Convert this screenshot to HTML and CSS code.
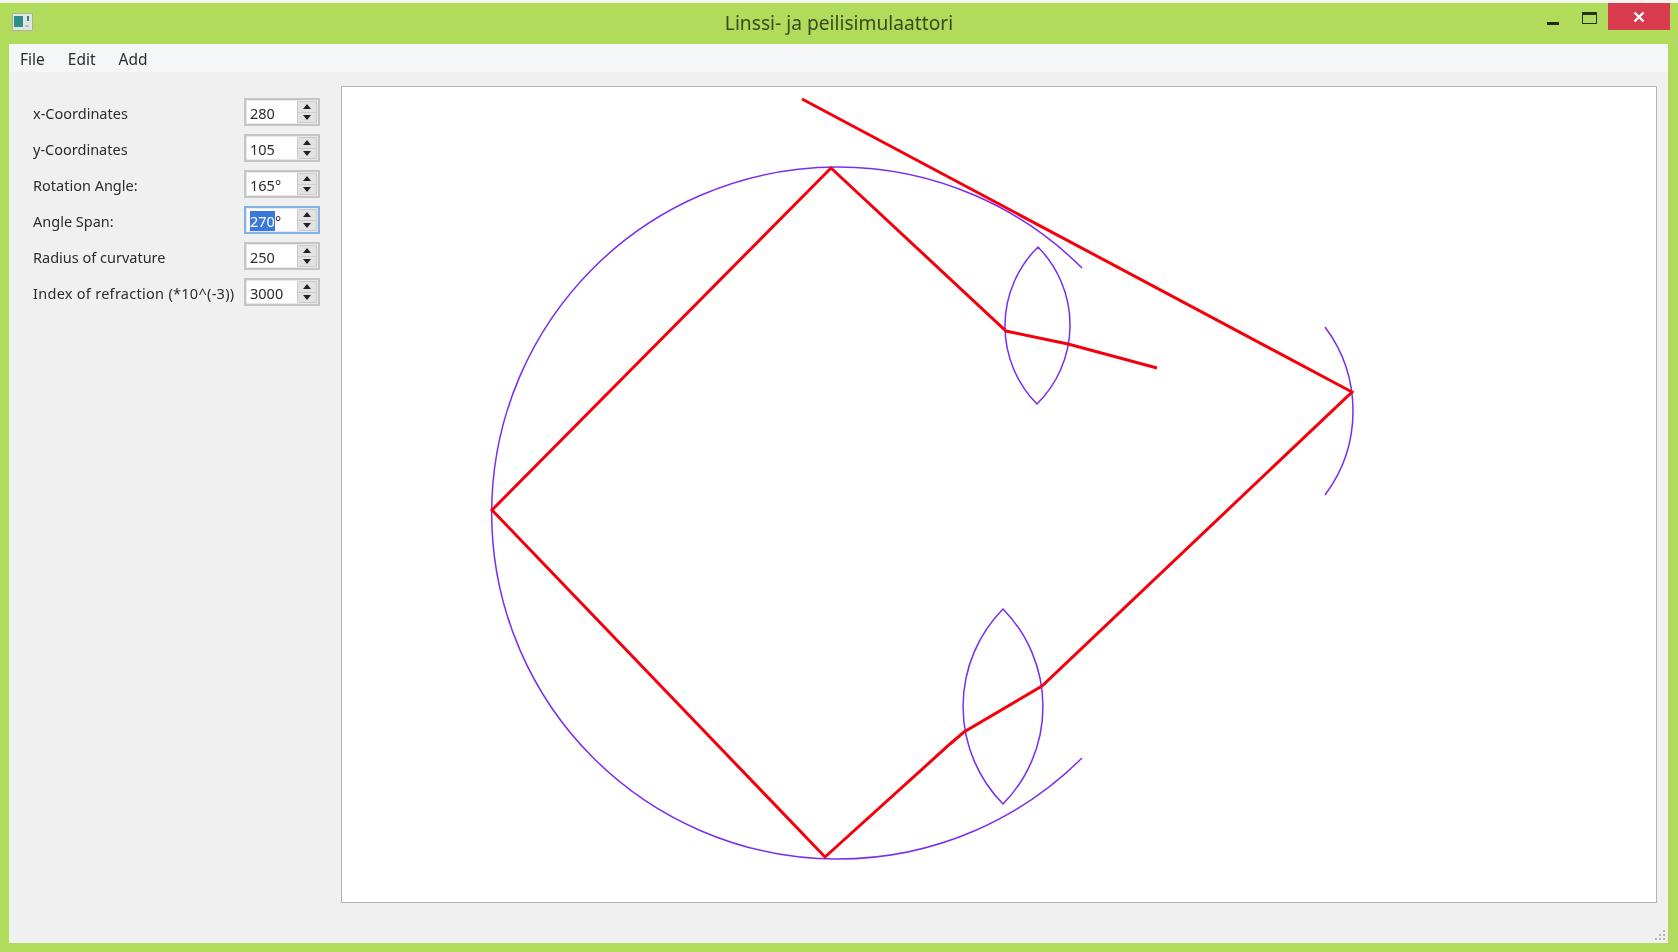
FILE: index.html
```html
<!DOCTYPE html>
<html lang="fi">
<head>
<meta charset="utf-8">
<title>Linssi- ja peilisimulaattori</title>
<link rel="stylesheet" href="styles.css">
</head>
<body>
<div class="window">
  <header class="titlebar">
    <svg class="app-icon" width="21" height="18" viewBox="0 0 21 18">
      <rect x="0.5" y="0.5" width="20" height="17" fill="#dfe6e4" stroke="#a9b39a"/>
      <rect x="2" y="3" width="9" height="11" fill="#2f8f86"/>
      <rect x="15" y="3" width="2" height="5" fill="#37808a"/>
      <rect x="13" y="12" width="4" height="2" fill="#b9c4c4"/>
    </svg>
    <div class="title">Linssi- ja peilisimulaattori</div>
    <div class="controls">
      <svg class="ctl-min" width="12" height="4" viewBox="0 0 12 4"><rect width="12" height="3" fill="#1f2a14"/></svg>
      <svg class="ctl-max" width="15" height="12" viewBox="0 0 15 12"><rect x="0.5" y="0.5" width="14" height="11" fill="none" stroke="#26301a"/><rect width="15" height="3" fill="#26301a"/></svg>
      <div class="ctl-close"><svg width="12" height="12" viewBox="0 0 12 12"><path d="M1.5 1.5L10.5 10.5M10.5 1.5L1.5 10.5" stroke="#fff" stroke-width="2.4" fill="none"/></svg></div>
    </div>
  </header>
  <div class="client">
    <nav class="menubar">
      <span class="menu-item">File</span>
      <span class="menu-item">Edit</span>
      <span class="menu-item">Add</span>
    </nav>
    <div class="main">
      <aside class="form">
        <div class="row"><span class="label">x-Coordinates</span><div class="spin"><span class="value">280</span><div class="btns"><i class="up"></i><i class="down"></i></div></div></div>
        <div class="row"><span class="label">y-Coordinates</span><div class="spin"><span class="value">105</span><div class="btns"><i class="up"></i><i class="down"></i></div></div></div>
        <div class="row"><span class="label">Rotation Angle:</span><div class="spin"><span class="value">165°</span><div class="btns"><i class="up"></i><i class="down"></i></div></div></div>
        <div class="row"><span class="label">Angle Span:</span><div class="spin focus"><span class="value"><span class="sel">270</span>°</span><div class="btns"><i class="up"></i><i class="down"></i></div></div></div>
        <div class="row"><span class="label">Radius of curvature</span><div class="spin"><span class="value">250</span><div class="btns"><i class="up"></i><i class="down"></i></div></div></div>
        <div class="row"><span class="label label-long">Index of refraction (*10^(-3))</span><div class="spin"><span class="value">3000</span><div class="btns"><i class="up"></i><i class="down"></i></div></div></div>
      </aside>
      <section class="canvas">
        <svg class="scene" viewBox="342 87 1314 815" width="1314" height="815">
          <g class="optic">
            <path d="M1082 268A346 346 0 1 0 1082 758"/>
            <path d="M1325 327A140 140 0 0 1 1325 495"/>
            <path d="M1038 247A111 111 0 0 0 1037 404A111 111 0 0 0 1038 247Z"/>
            <path d="M1003 609A139 139 0 0 0 1003 804A139 139 0 0 0 1003 609Z"/>
          </g>
          <g class="ray">
            <path d="M802 99L1352 392L1042 686L964 732L950 744L825 857L492 510L831 168L1006 331L1068 344L1157 368"/>
          </g>
        </svg>
      </section>
    </div>
    <svg class="grip" width="12" height="12" viewBox="0 0 12 12">
      <g fill="#b4b4b4"><rect x="9" y="1" width="2" height="2"/><rect x="5" y="5" width="2" height="2"/><rect x="9" y="5" width="2" height="2"/><rect x="1" y="9" width="2" height="2"/><rect x="5" y="9" width="2" height="2"/><rect x="9" y="9" width="2" height="2"/></g>
    </svg>
  </div>
</div>
</body>
</html>
```
FILE: styles.css
```css
* { box-sizing: border-box; }
html, body { margin: 0; height: 100%; }
body {
  background: #f4f6ee;
  padding-top: 3px;
  font-family: "Noto Sans", "Open Sans", sans-serif;
  font-size: 14.5px;
  color: #2b2b30;
  overflow: hidden;
}
.window {
  height: 949px;
  background: #b0db5b;
  display: flex;
  flex-direction: column;
  padding-bottom: 9px;
  filter: blur(0.35px);
}
.titlebar {
  height: 41px;
  flex: none;
  position: relative;
  display: flex;
  align-items: flex-start;
  padding-left: 12px;
}
.app-icon { margin-top: 10px; }
.title {
  position: absolute;
  left: 0;
  right: 0;
  top: 7px;
  text-align: center;
  font-size: 19.2px;
  line-height: 26px;
  color: #3a4a20;
}
.controls {
  margin-left: auto;
  margin-right: 8px;
  display: flex;
  align-items: flex-start;
}
.ctl-min { margin-top: 19px; margin-right: 23px; }
.ctl-max { margin-top: 9px; margin-right: 11px; }
.ctl-close {
  width: 62px;
  height: 27px;
  background: #d93b4e;
  display: flex;
  align-items: center;
  justify-content: center;
}
.client {
  flex: 1;
  margin: 0 10px 0 9px;
  background: #f0f0f0;
  display: flex;
  flex-direction: column;
  position: relative;
}
.menubar {
  height: 28px;
  flex: none;
  background: #f5f6f7;
  display: flex;
  align-items: center;
  padding: 2px 0 0 11px;
  gap: 23px;
  font-size: 15.5px;
}
.main { flex: 1; display: flex; min-height: 0; }
.form {
  width: 333px;
  flex: none;
  padding: 26px 0 0 24px;
  display: flex;
  flex-direction: column;
  gap: 8px;
}
.row { height: 28px; display: flex; align-items: center; white-space: nowrap; }
.label { width: 211px; flex: none; padding-top: 2px; }
.label-long { letter-spacing: 0.28px; }
.spin {
  width: 76px;
  height: 28px;
  flex: none;
  border: 2px solid #c4c4c4;
  outline: 1px solid #e8e8e8;
  outline-offset: -3px;
  background: #fff;
  display: flex;
  align-items: center;
  padding-left: 4px;
}
.spin.focus { border-color: #7fb3e8; }
.value { flex: 1; line-height: 20px; padding-top: 2px; }
.sel { background: #3a78e0; color: #fff; }
.btns {
  width: 20px;
  height: 22px;
  margin-right: 1px;
  background: #e2e2e2;
  border: 1px solid #cdcdcd;
  display: flex;
  flex-direction: column;
}
.btns i {
  flex: 1;
  display: flex;
  align-items: center;
  justify-content: center;
}
.btns i.down { border-top: 1px solid #cdcdcd; }
.btns i::after {
  content: "";
  border-left: 4px solid transparent;
  border-right: 4px solid transparent;
}
.btns i.up::after { border-bottom: 5px solid #222; }
.btns i.down::after { border-top: 5px solid #222; }
.canvas {
  flex: 1;
  padding: 15px 12px 41px 0;
  min-width: 0;
}
.scene {
  display: block;
  background: #fff;
  box-shadow: 0 0 0 1px #b4b4b4;
}
.optic path { fill: none; stroke: #7a2cf0; stroke-width: 1.5; }
.ray path { fill: none; stroke: #f4000c; stroke-width: 3; stroke-linejoin: miter; }
.grip { position: absolute; right: 2px; bottom: 2px; }
```
